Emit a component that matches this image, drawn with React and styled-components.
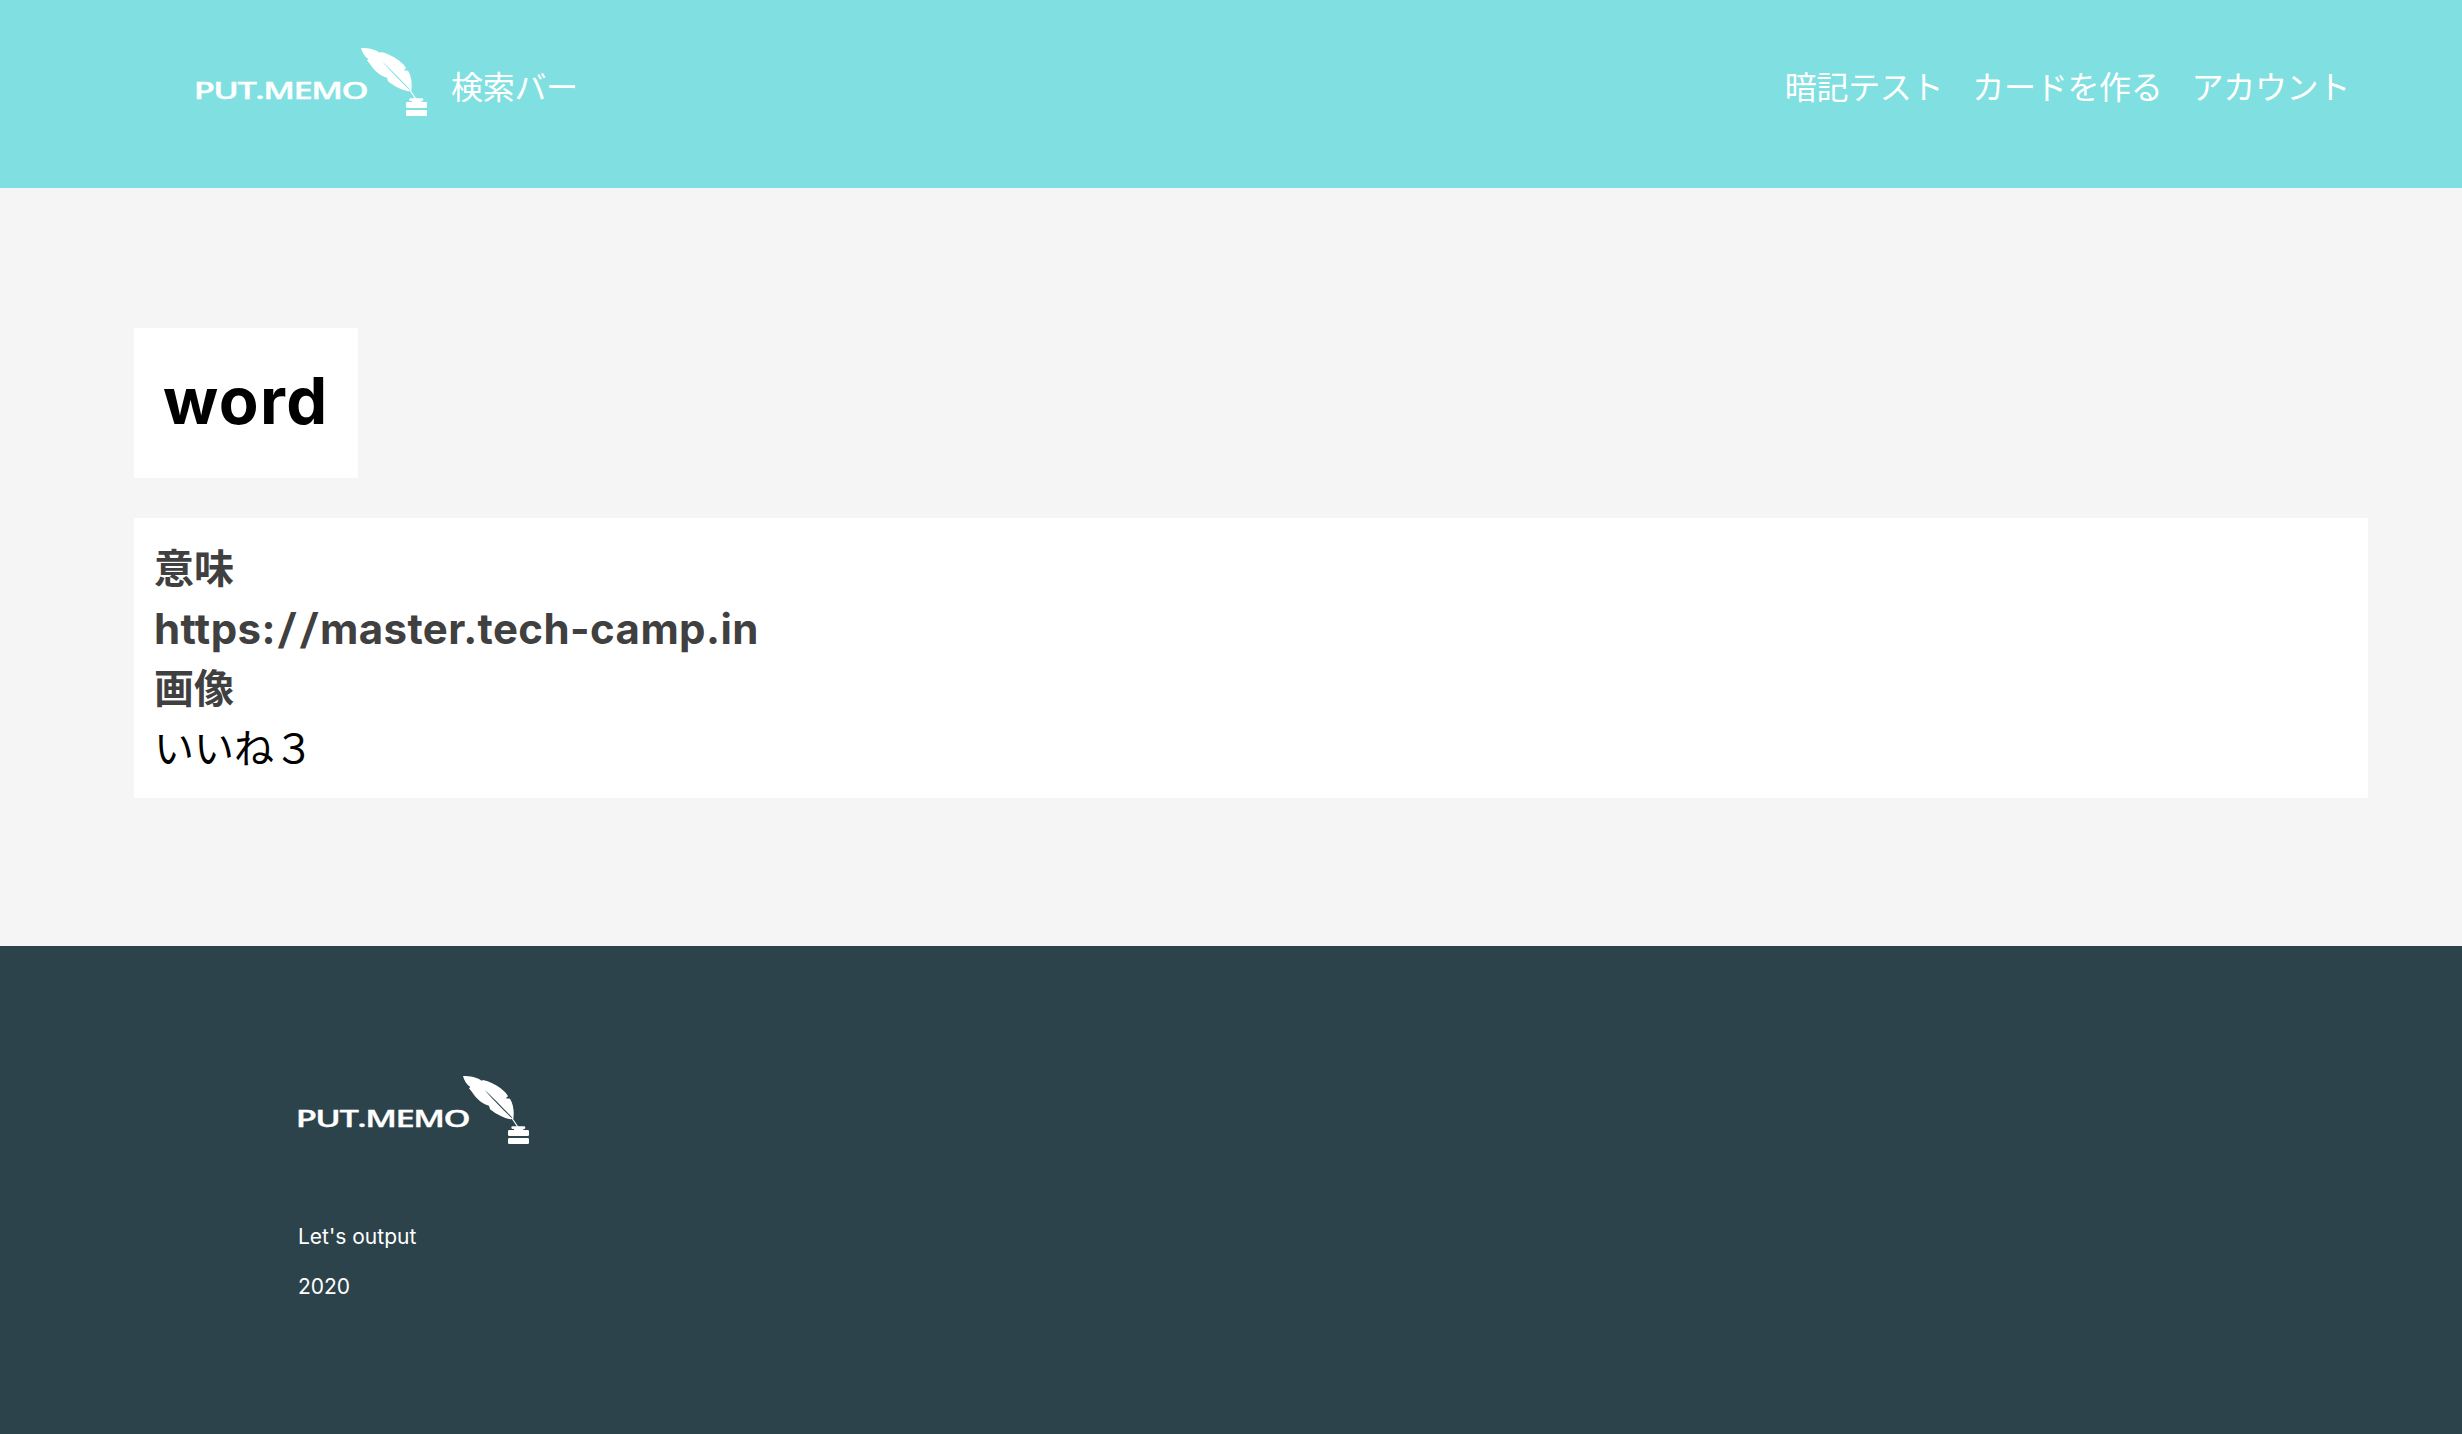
import React from "react"
import styled, { createGlobalStyle, ThemeProvider } from "styled-components"

const theme = {
  color: {
    header: "#80dfe0",
    page: "#f5f5f5",
    footer: "#2d434b",
    white: "#ffffff",
    label: "#404040",
  },
  font: `Inter, "Noto Sans CJK JP", sans-serif`,
}

const GlobalStyle = createGlobalStyle`
  body {
    margin: 0;
    font-family: ${theme.font};
    background-color: ${theme.color.page};
  }
  h1,
  p {
    margin: 0;
  }
  a {
    color: inherit;
    text-decoration: none;
  }
`

const HeaderContainer = styled.header`
  display: flex;
  align-items: flex-start;
  justify-content: space-between;
  height: 188px;
  padding: 40px 112px 0 186px;
  box-sizing: border-box;
  color: ${props => props.theme.color.white};
  background-color: ${props => props.theme.color.header};
`

const HeaderSide = styled.div`
  display: flex;
  gap: ${props => props.gap};
`

const HeaderText = styled.a`
  margin-top: 24px;
  font-size: 32px;
  line-height: 48px;
  letter-spacing: -0.3px;
`

const LogoImage = styled.svg`
  display: block;
  width: 244px;
  height: 80px;
  fill: currentColor;
  overflow: visible;
  text {
    font-family: "Open Sans", sans-serif;
    font-size: 68px;
    font-weight: 600;
    letter-spacing: -3px;
    stroke: currentColor;
    stroke-width: 1px;
  }
`

const Main = styled.main`
  display: flex;
  flex-direction: column;
  align-items: flex-start;
  gap: 40px;
  height: 758px;
  padding: 140px 94px 0 134px;
  box-sizing: border-box;
`

const WordBox = styled.div`
  width: 224px;
  height: 150px;
  padding: 28px 29px;
  box-sizing: border-box;
  background-color: ${props => props.theme.color.white};
  h1 {
    font-size: 65px;
    font-weight: 700;
    line-height: 90px;
    letter-spacing: 1.4px;
    white-space: nowrap;
  }
`

const Card = styled.div`
  width: 100%;
  height: 280px;
  padding: 21px 20px;
  box-sizing: border-box;
  background-color: ${props => props.theme.color.white};
`

const CardLabel = styled.p`
  color: ${props => props.theme.color.label};
  font-size: 40px;
  font-weight: 700;
  line-height: 60px;
`

const CardLink = styled(CardLabel)`
  font-size: 42px;
  letter-spacing: 0.4px;
`

const Slash = styled.span`
  display: inline-block;
  margin: 0 2.7px;
  transform: skewX(-5deg);
`

const CardText = styled.p`
  color: #000;
  font-size: 40px;
  line-height: 60px;
`

const FooterContainer = styled.footer`
  height: 488px;
  padding: 122px 288px 0;
  box-sizing: border-box;
  color: ${props => props.theme.color.white};
  background-color: ${props => props.theme.color.footer};
`

const FooterNote = styled.div`
  display: grid;
  gap: 20px;
  margin: 74px 0 0 10px;
  font-size: 21px;
  line-height: 30px;
`

const Logo = () => (
  <LogoImage viewBox="-30 0 732 240" role="img" aria-label="PUT.MEMO">
    <text transform="translate(-7 176) scale(1.52 1)">PUT.MEMO</text>
    <g transform="translate(462 0)">
      {/* feather, with the shaft cut out */}
      <path
        fillRule="evenodd"
        d="M33 24C54 24 76 28 89 38L93 36C112 40 130 49 146 61C157 70 164 77 168 85L161 91L174 92C184 108 187 130 184 152L176 154C158 151 135 141 114 124L111 113C93 109 75 95 60 72L51 61L55 57C44 50 36 38 33 24ZM98 66C112 83 148 120 179 150L181 149C151 117 119 85 98 66Z"
      />
      <path d="M178 151L181 149L199 176L195 176Z" />
      {/* ink bottle */}
      <rect x="178" y="175" width="42" height="8" rx="4" />
      <rect x="186" y="182" width="28" height="5" />
      <rect x="168" y="186" width="63" height="18" rx="4" />
      <rect x="168" y="210" width="63" height="18" rx="4" />
    </g>
  </LogoImage>
)

const Header = () => (
  <HeaderContainer>
    <HeaderSide gap="21px">
      <a href="#top">
        <Logo />
      </a>
      <HeaderText as="span">検索バー</HeaderText>
    </HeaderSide>
    <HeaderSide gap="29px">
      <HeaderText href="#test">暗記テスト</HeaderText>
      <HeaderText href="#new">カードを作る</HeaderText>
      <HeaderText href="#account">アカウント</HeaderText>
    </HeaderSide>
  </HeaderContainer>
)

const Footer = () => (
  <FooterContainer>
    <Logo />
    <FooterNote>
      <p>Let's output</p>
      <p>2020</p>
    </FooterNote>
  </FooterContainer>
)

const App = () => (
  <ThemeProvider theme={theme}>
    <GlobalStyle />
    <Header />
    <Main>
      <WordBox>
        <h1>word</h1>
      </WordBox>
      <Card>
        <CardLabel>意味</CardLabel>
        <CardLink>
          https:<Slash>/</Slash>
          <Slash>/</Slash>master.tech-camp.in
        </CardLink>
        <CardLabel>画像</CardLabel>
        <CardText>いいね３</CardText>
      </Card>
    </Main>
    <Footer />
  </ThemeProvider>
)

export default App
